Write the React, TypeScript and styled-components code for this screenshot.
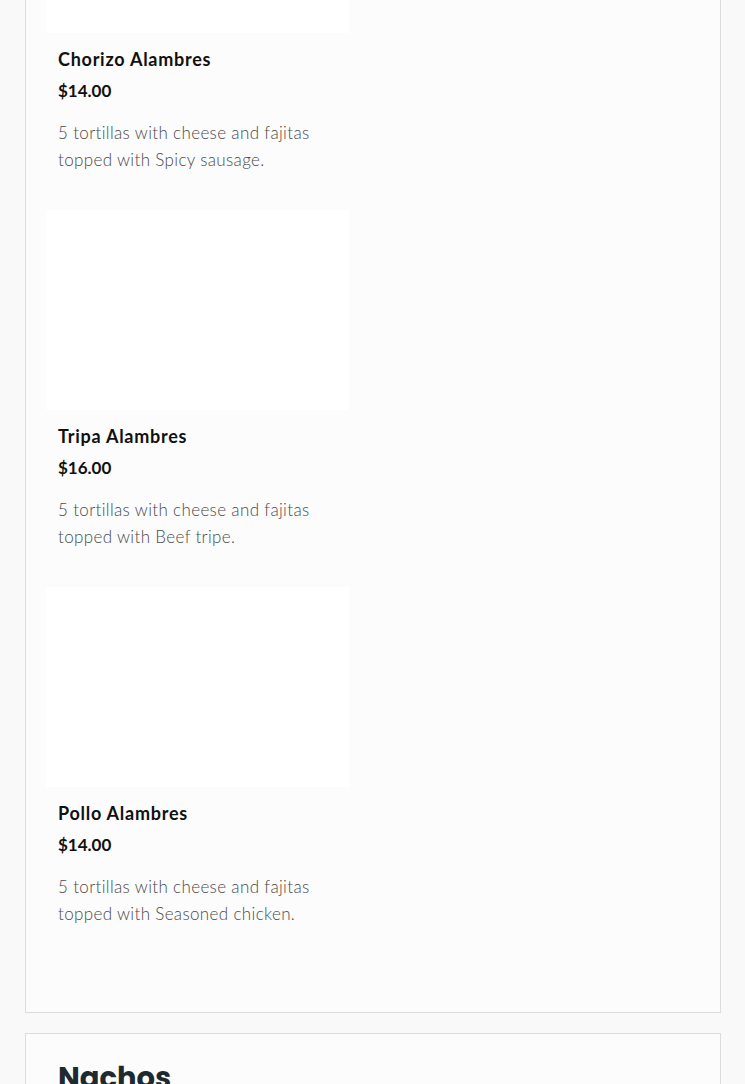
import { FC } from 'react';
import styled, { createGlobalStyle } from 'styled-components';

interface MenuItem {
  name: string;
  price: string;
  description: string;
}

const alambres: MenuItem[] = [
  {
    name: 'Chorizo Alambres',
    price: '$14.00',
    description: '5 tortillas with cheese and fajitas topped with Spicy sausage.',
  },
  {
    name: 'Tripa Alambres',
    price: '$16.00',
    description: '5 tortillas with cheese and fajitas topped with Beef tripe.',
  },
  {
    name: 'Pollo Alambres',
    price: '$14.00',
    description: '5 tortillas with cheese and fajitas topped with Seasoned chicken.',
  },
];

const GlobalStyle = createGlobalStyle`
  html, body {
    margin: 0;
    padding: 0;
    background: #f9f9f9;
  }
  * {
    box-sizing: border-box;
  }
`;

const MenuItemCard: FC<{ item: MenuItem }> = ({ item }) => (
  <ItemCard>
    <ItemImage />
    <ItemBody>
      <ItemName>{item.name}</ItemName>
      <ItemPrice>{item.price}</ItemPrice>
      <ItemDescription>{item.description}</ItemDescription>
    </ItemBody>
  </ItemCard>
);

const App: FC = () => (
  <>
    <GlobalStyle />
    <Page>
      <CategorySection>
        <ItemGrid>
          {alambres.map((item) => (
            <MenuItemCard key={item.name} item={item} />
          ))}
        </ItemGrid>
      </CategorySection>
      <CategorySection>
        <CategoryTitle>Nachos</CategoryTitle>
      </CategorySection>
    </Page>
  </>
);

// page is shown scrolled: the first item's photo starts above the frame
const Page = styled.main`
  display: flex;
  flex-direction: column;
  gap: 20px;
  width: 696px;
  margin: -188px 0 0 25px;
`;

const CategorySection = styled.section`
  background: #fcfcfc;
  border: 1px solid #dcdcdc;
  padding: 20px 20px 68px;
`;

const CategoryTitle = styled.h2`
  margin: 6px 0 0 12px;
  font-family: Poppins, 'Inter', 'Noto Sans', sans-serif;
  font-weight: 700;
  font-size: 29px;
  line-height: 36px;
  color: #1e2a30;
`;

const ItemGrid = styled.div`
  display: grid;
  grid-template-columns: 303px;
  row-gap: 20px;
`;

const ItemCard = styled.article`
  display: flex;
  flex-direction: column;
`;

const ItemImage = styled.div`
  height: 200px;
  background: #ffffff;
`;

const ItemBody = styled.div`
  padding: 15px 12px 17px;
  font-family: 'Lato', 'Noto Sans', sans-serif;
`;

const ItemName = styled.h3`
  margin: 0;
  font-size: 18px;
  line-height: 23px;
  font-weight: 700;
  letter-spacing: 0.75px;
  color: #111111;
`;

const ItemPrice = styled.div`
  margin-top: 10px;
  font-size: 17px;
  line-height: 20px;
  font-weight: 700;
  color: #111111;
`;

const ItemDescription = styled.p`
  margin: 18px 0 0;
  font-size: 17px;
  line-height: 27px;
  font-weight: 300;
  letter-spacing: 0.35px;
  color: #4a4a4a;
`;

export default App;
